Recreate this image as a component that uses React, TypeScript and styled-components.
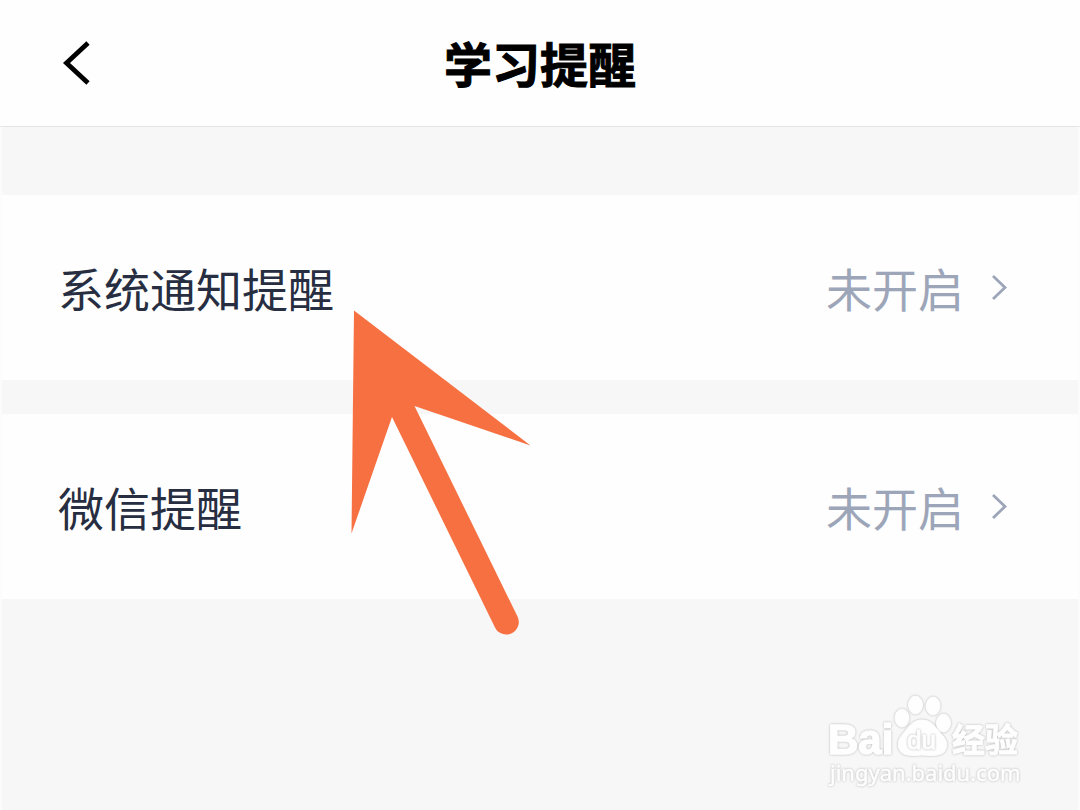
import React from "react";
import styled, { createGlobalStyle } from "styled-components";

const GlobalStyle = createGlobalStyle`
  * { box-sizing: border-box; }
  html, body { margin: 0; padding: 0; background: #f7f7f7; }
  body, button { font-family: "Noto Sans CJK SC", sans-serif; }
`;

const Page = styled.div`
  position: relative;
  display: flex;
  flex-direction: column;
  min-height: 100vh;
  overflow: hidden;
  background: #f7f7f7;
`;

const Header = styled.header`
  display: grid;
  grid-template-columns: 96px 1fr 96px;
  align-items: center;
  padding: 26px 0 28px;
  background: #fefefe;
  border-bottom: 1px solid #e5e5e5;
`;

const BackButton = styled.button`
  display: flex;
  justify-content: flex-end;
  padding: 2px 4px 0 0;
  border: 0;
  background: none;
  cursor: pointer;
`;

const Title = styled.h1`
  margin: 0;
  text-align: center;
  font-size: 48px;
  line-height: 72px;
  font-weight: 700;
  color: #000;
  -webkit-text-stroke: 1px #000;
`;

const Main = styled.main`
  position: relative;
  flex: 1;
  padding-top: 68px;
  border: solid #fcfcfc;
  border-width: 0 2px;
`;

const List = styled.ul`
  display: flex;
  flex-direction: column;
  gap: 34px;
  margin: 0;
  padding: 0;
  list-style: none;
`;

const Row = styled.button`
  display: flex;
  align-items: center;
  width: 100%;
  padding: 56px 70px 57px 56px;
  border: 0;
  background: #fefefe;
  font-size: 46px;
  line-height: 72px;
  text-align: left;
  cursor: pointer;
`;

const Label = styled.span`
  flex: 1;
  color: #272e41;
`;

const Status = styled.span`
  margin-right: 26px;
  color: #9da6b9;
`;

const Pointer = styled.svg`
  position: absolute;
  top: 180px;
  left: 346px;
  pointer-events: none;
`;

const Watermark = styled.svg`
  position: absolute;
  right: 40px;
  bottom: 10px;
  pointer-events: none;
`;

const Outlined = styled.g`
  fill: #fefefe;
  stroke: #fefefe;
  stroke-linejoin: round;
  filter: drop-shadow(0 0 1px #b4b4b4);
`;

const items = [
  { label: "系统通知提醒", status: "未开启" },
  { label: "微信提醒", status: "未开启" },
];

const BackIcon = () => (
  <svg width="30" height="46" viewBox="0 0 30 46" fill="none" aria-hidden="true">
    <path d="M26 3 4.500 23 26 43" stroke="#000" strokeWidth="4.800" />
  </svg>
);

const ChevronIcon = () => (
  <svg width="18" height="28" viewBox="0 0 18 28" fill="none" aria-hidden="true">
    <path d="M3 3 15 14.500 3 26" stroke="#9da6b9" strokeWidth="2.800" />
  </svg>
);

const App: React.FC = () => (
  <>
    <GlobalStyle />
    <Page>
      <Header>
        <BackButton type="button" aria-label="返回">
          <BackIcon />
        </BackButton>
        <Title>学习提醒</Title>
      </Header>
      <Main>
        <List>
          {items.map((item) => (
            <li key={item.label}>
              <Row type="button">
                <Label>{item.label}</Label>
                <Status>{item.status}</Status>
                <ChevronIcon />
              </Row>
            </li>
          ))}
        </List>
        <Pointer width="190" height="332" viewBox="0 0 190 332" aria-hidden="true">
          <path
            d="M6 3.500 182.500 138.500 66.500 99 169.500 309.500A12.300 12.300 0 0 1 147 320.500L44 110 3.500 226.500Z"
            fill="#f77041"
          />
        </Pointer>
      </Main>
      <Watermark width="230" height="120" viewBox="0 0 230 120">
        <Outlined>
          <text x="18" y="74" fontFamily="Liberation Sans, sans-serif" fontWeight="700" fontSize="42" strokeWidth="1.500">
            Bai
          </text>
          <ellipse cx="92" cy="38" rx="7" ry="9" />
          <ellipse cx="105.500" cy="25" rx="7" ry="9" />
          <ellipse cx="123" cy="26" rx="7" ry="9" />
          <ellipse cx="133.500" cy="43" rx="7" ry="9" />
          <path d="M112 40C120 40 124 45 128 50C132 55 138 60 136.500 67C134.500 76 126 76 112 75C99 76 91 76 88.500 67C87 60 92 55 96 50C100 45 104 40 112 40Z" />
          <text x="142" y="72" fontFamily="Noto Sans CJK SC, sans-serif" fontWeight="700" fontSize="33" strokeWidth="1">
            经验
          </text>
        </Outlined>
        <Outlined>
          <text x="97" y="69" fontFamily="Liberation Sans, sans-serif" fontSize="26" strokeWidth="1">
            du
          </text>
        </Outlined>
        <Outlined>
          <text x="20" y="101" fontFamily="Noto Sans, sans-serif" fontSize="22" strokeWidth="0.500">
            jingyan.baidu.com
          </text>
        </Outlined>
      </Watermark>
    </Page>
  </>
);

export default App;
